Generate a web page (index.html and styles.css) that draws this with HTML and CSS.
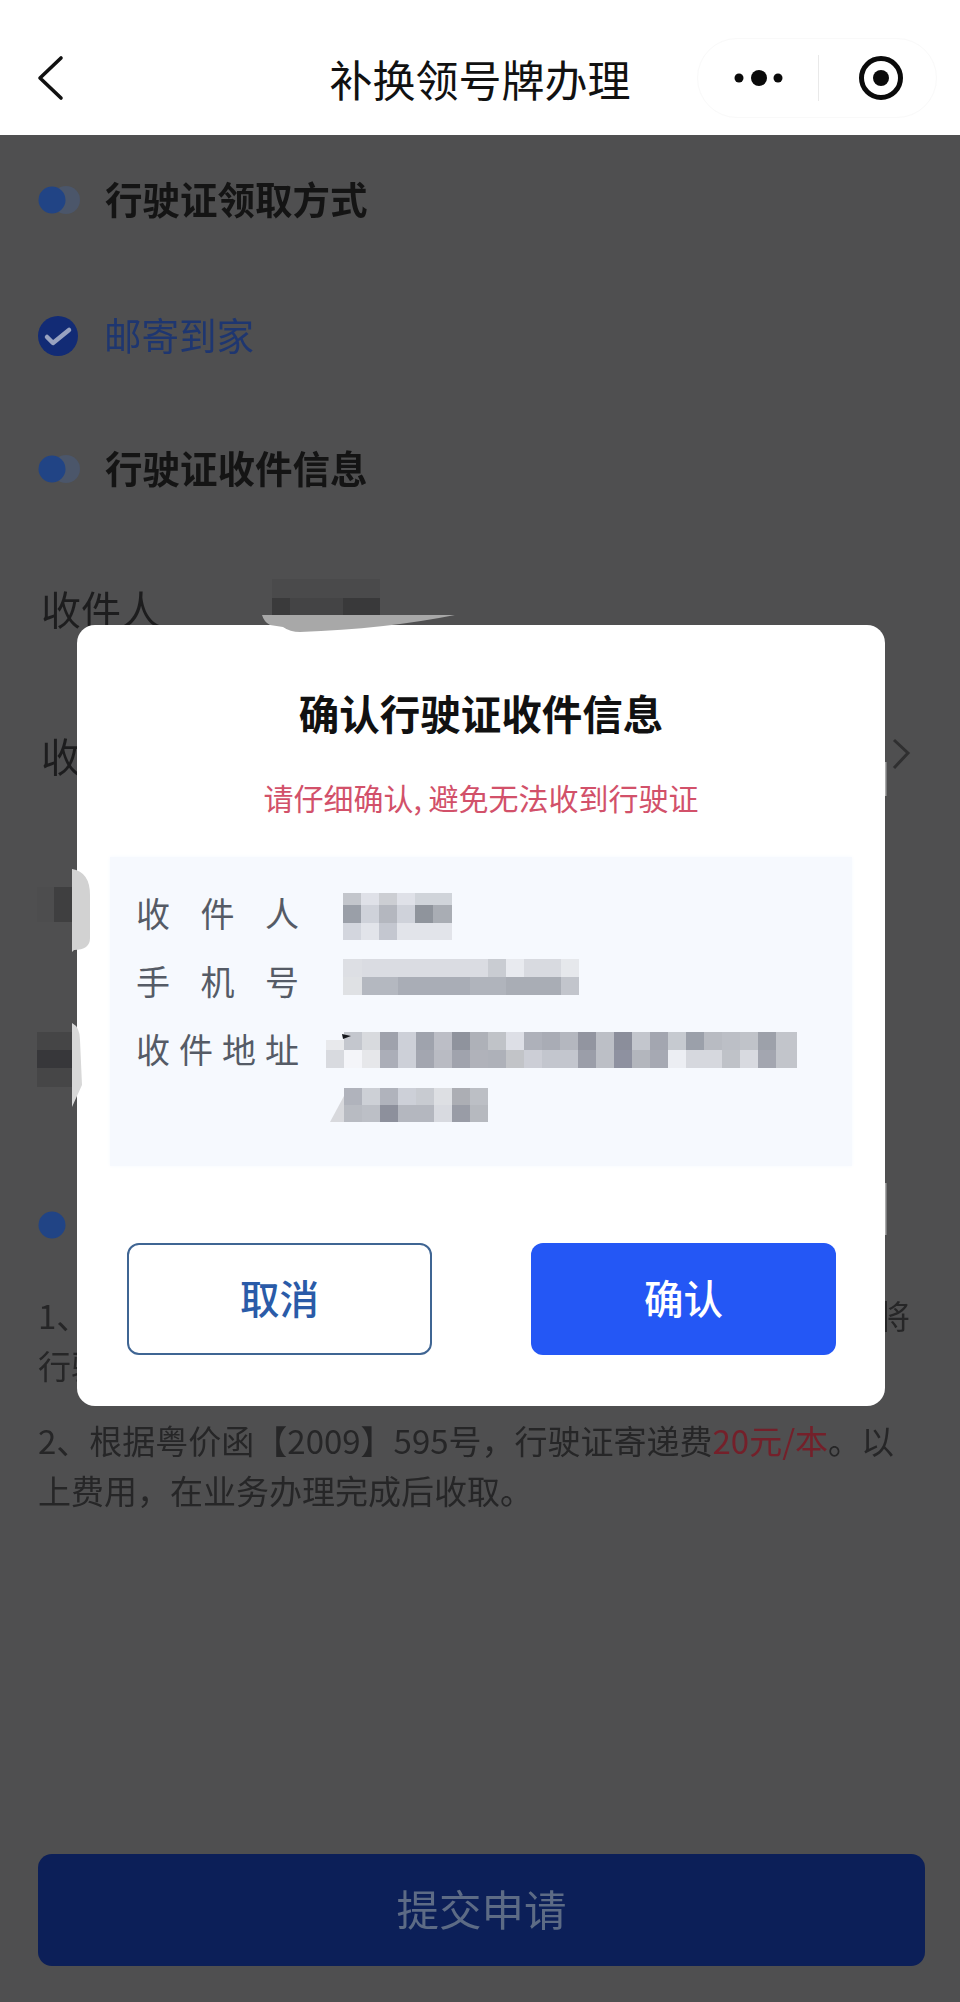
FILE: index.html
```html
<!DOCTYPE html>
<html lang="zh-CN">
<head>
<meta charset="utf-8">
<title>补换领号牌办理</title>
<link rel="stylesheet" href="styles.css">
</head>
<body>
<div class="screen">
  <header class="nav">
    <svg class="nav-back" width="30" height="48" viewBox="0 0 30 48"><polyline points="25,4 4,24 25,44" fill="none" stroke="#111" stroke-width="3.6" stroke-linecap="round" stroke-linejoin="round"/></svg>
    <h1 class="nav-title">补换领号牌办理</h1>
    <div class="capsule">
      <svg class="capsule-dots" width="60" height="20" viewBox="0 0 60 20"><circle cx="10" cy="10" r="4.5" fill="#0a0a0a"/><circle cx="30" cy="10" r="8" fill="#0a0a0a"/><circle cx="49" cy="10" r="4.5" fill="#0a0a0a"/></svg>
      <span class="capsule-line"></span>
      <svg class="capsule-target" width="46" height="46" viewBox="0 0 46 46"><circle cx="23" cy="23" r="19.5" fill="none" stroke="#0a0a0a" stroke-width="5"/><circle cx="23" cy="23" r="8" fill="#0a0a0a"/></svg>
    </div>
  </header>

  <main class="page">
    <div class="row row-a">
      <svg class="dot" width="42" height="30" viewBox="0 0 42 30"><circle cx="28" cy="15" r="14" fill="#4b566a"/><circle cx="14" cy="15" r="13.5" fill="#214485"/></svg>
      <h2 class="section-title">行驶证领取方式</h2>
    </div>
    <div class="row row-b">
      <svg class="check" width="42" height="42" viewBox="0 0 42 42"><circle cx="20" cy="21" r="20" fill="#122b75"/><polyline points="9,22 15,28 31,15" fill="none" stroke="#98a2c0" stroke-width="4.5" stroke-linecap="round" stroke-linejoin="round"/></svg>
      <span class="choice">邮寄到家</span>
    </div>
    <div class="row row-c">
      <svg class="dot" width="42" height="30" viewBox="0 0 42 30"><circle cx="28" cy="15" r="14" fill="#4b566a"/><circle cx="14" cy="15" r="13.5" fill="#214485"/></svg>
      <h2 class="section-title">行驶证收件信息</h2>
    </div>
    <div class="row row-d">
      <span class="field">收件人</span>
      <svg class="field-mosaic" width="108" height="38" viewBox="0 0 108 38">
        <rect width="108" height="19" fill="#4a4a4b"/>
        <rect y="19" width="18" height="19" fill="#3a3a3b"/><rect x="18" y="19" width="53" height="19" fill="#444445"/><rect x="71" y="19" width="37" height="19" fill="#39393a"/>
      </svg>
    </div>
    <div class="row row-e">
      <span class="field">收件地址</span>
      <svg class="row-arrow" width="20" height="34" viewBox="0 0 20 34"><polyline points="3,3 17,16 3,31" fill="none" stroke="#2f2f30" stroke-width="3"/></svg>
    </div>
    <div class="ghost ghost-one"></div>
    <div class="ghost ghost-two"></div>
    <div class="row row-f">
      <svg class="dot" width="42" height="30" viewBox="0 0 42 30"><circle cx="14" cy="15" r="13.5" fill="#214485"/></svg>
      <h2 class="section-title">温馨提示</h2>
    </div>
    <p class="note note-first note-split"><span>1、</span><span>将</span></p>
    <p class="note">行驶</p>
    <p class="note note-next">2、根据粤价函【2009】595号，行驶证寄递费<span class="fee">20元/本</span>。以<br>上费用，在业务办理完成后收取。</p>
    <button class="submit" type="button">提交申请</button>
  </main>

  <section class="dialog">
    <h2 class="dialog-title">确认行驶证收件信息</h2>
    <p class="dialog-warn">请仔细确认, 避免无法收到行驶证</p>
    <div class="info">
      <div class="info-labels">
        <span class="info-label">收件人</span>
        <span class="info-label">手机号</span>
        <span class="info-label">收件地址</span>
      </div>
      <svg class="info-mosaic" width="471" height="237" viewBox="326 888 471 237">
        <g>
          <rect x="343" y="893" width="18" height="12" fill="#c3c6cc"/><rect x="361" y="893" width="18" height="12" fill="#dfe1e8"/><rect x="379" y="893" width="18" height="12" fill="#ccced3"/><rect x="397" y="893" width="18" height="12" fill="#dfe1e8"/><rect x="415" y="893" width="37" height="12" fill="#d0d4da"/>
          <rect x="343" y="905" width="18" height="18" fill="#9a9fa8"/><rect x="361" y="905" width="18" height="18" fill="#cfd2da"/><rect x="379" y="905" width="18" height="18" fill="#b4b7bf"/><rect x="397" y="905" width="18" height="18" fill="#cfd2da"/><rect x="415" y="905" width="18" height="18" fill="#8f949c"/><rect x="433" y="905" width="19" height="18" fill="#a9adb4"/>
          <rect x="343" y="923" width="18" height="17" fill="#d3d6de"/><rect x="361" y="923" width="18" height="17" fill="#e2e4ea"/><rect x="379" y="923" width="18" height="17" fill="#c4c7d0"/><rect x="397" y="923" width="55" height="17" fill="#e2e4ea"/>
        </g>
        <g>
          <rect x="343" y="959" width="19" height="18" fill="#dddfe4"/><rect x="362" y="959" width="126" height="18" fill="#dadce2"/><rect x="488" y="959" width="18" height="18" fill="#c9ccd2"/><rect x="506" y="959" width="18" height="18" fill="#e8eaef"/><rect x="524" y="959" width="37" height="18" fill="#d8dae0"/><rect x="561" y="959" width="18" height="18" fill="#e6e8ec"/>
          <rect x="343" y="977" width="19" height="18" fill="#dfe1e4"/><rect x="362" y="977" width="36" height="18" fill="#b4b8c0"/><rect x="398" y="977" width="72" height="18" fill="#a9adb6"/><rect x="470" y="977" width="36" height="18" fill="#b0b4bc"/><rect x="506" y="977" width="55" height="18" fill="#a9adb5"/><rect x="561" y="977" width="18" height="18" fill="#c2c5cc"/>
        </g>
        <g>
          <rect x="326" y="1040" width="18" height="10" fill="#e8e9ec"/><rect x="344" y="1032" width="18" height="18" fill="#c4c7ce"/><rect x="362" y="1032" width="18" height="18" fill="#d8dade"/><rect x="380" y="1032" width="18" height="18" fill="#9fa2ac"/><rect x="398" y="1032" width="18" height="18" fill="#cdd0d8"/><rect x="416" y="1032" width="18" height="18" fill="#9fa3ad"/><rect x="434" y="1032" width="18" height="18" fill="#bcbec6"/><rect x="452" y="1032" width="18" height="18" fill="#8f939d"/><rect x="470" y="1032" width="18" height="18" fill="#aeb1b8"/><rect x="488" y="1032" width="18" height="18" fill="#c0c3c8"/><rect x="506" y="1032" width="18" height="18" fill="#dddfe6"/><rect x="524" y="1032" width="18" height="18" fill="#aeb1ba"/><rect x="542" y="1032" width="18" height="18" fill="#a9acb5"/><rect x="560" y="1032" width="18" height="18" fill="#b4b7bf"/><rect x="578" y="1032" width="18" height="18" fill="#9295a0"/><rect x="596" y="1032" width="18" height="18" fill="#bcbfc6"/><rect x="614" y="1032" width="18" height="18" fill="#8b8e9b"/><rect x="632" y="1032" width="18" height="18" fill="#c3c6cd"/><rect x="650" y="1032" width="18" height="18" fill="#a3a6b0"/><rect x="668" y="1032" width="18" height="18" fill="#c6cad0"/><rect x="686" y="1032" width="18" height="18" fill="#9ba0aa"/><rect x="704" y="1032" width="18" height="18" fill="#b8bbc2"/><rect x="722" y="1032" width="18" height="18" fill="#bcbfc6"/><rect x="740" y="1032" width="18" height="18" fill="#c0c3c9"/><rect x="758" y="1032" width="18" height="18" fill="#9da1aa"/><rect x="776" y="1032" width="21" height="18" fill="#c2c5cb"/>
          <rect x="326" y="1050" width="18" height="18" fill="#d8dadf"/><rect x="344" y="1050" width="18" height="18" fill="#f4f5f9"/><rect x="362" y="1050" width="18" height="18" fill="#e6e7ea"/><rect x="380" y="1050" width="18" height="18" fill="#abaeb8"/><rect x="398" y="1050" width="18" height="18" fill="#cdd0d8"/><rect x="416" y="1050" width="18" height="18" fill="#a3a6b0"/><rect x="434" y="1050" width="18" height="18" fill="#b9bbc3"/><rect x="452" y="1050" width="18" height="18" fill="#a0a3ad"/><rect x="470" y="1050" width="18" height="18" fill="#b0b2ba"/><rect x="488" y="1050" width="18" height="18" fill="#aeb1b9"/><rect x="506" y="1050" width="18" height="18" fill="#c2c4c8"/><rect x="524" y="1050" width="18" height="18" fill="#ccced6"/><rect x="542" y="1050" width="36" height="18" fill="#c3c6ce"/><rect x="578" y="1050" width="18" height="18" fill="#9b9ea9"/><rect x="596" y="1050" width="18" height="18" fill="#bcbfc6"/><rect x="614" y="1050" width="18" height="18" fill="#8e91a0"/><rect x="632" y="1050" width="18" height="18" fill="#b3b6bd"/><rect x="650" y="1050" width="18" height="18" fill="#a6a9b3"/><rect x="668" y="1050" width="18" height="18" fill="#eceef3"/><rect x="686" y="1050" width="36" height="18" fill="#d6d8de"/><rect x="722" y="1050" width="18" height="18" fill="#bfc2c8"/><rect x="740" y="1050" width="18" height="18" fill="#d8dae0"/><rect x="758" y="1050" width="18" height="18" fill="#a3a6b0"/><rect x="776" y="1050" width="21" height="18" fill="#c2c5cb"/>
          <polygon points="342,1034 351,1036 343,1039" fill="#15171c"/>
        </g>
        <g>
          <polygon points="330,1122 344,1096 344,1122" fill="#d8d9dd"/>
          <rect x="344" y="1088" width="18" height="17" fill="#b0b3bc"/><rect x="362" y="1088" width="18" height="17" fill="#cdd0d6"/><rect x="380" y="1088" width="18" height="17" fill="#b0b3bc"/><rect x="398" y="1088" width="18" height="17" fill="#cdd0d8"/><rect x="416" y="1088" width="18" height="17" fill="#c8cbd1"/><rect x="434" y="1088" width="18" height="17" fill="#dddfe3"/><rect x="452" y="1088" width="18" height="17" fill="#acaeb4"/><rect x="470" y="1088" width="18" height="17" fill="#bcbfc5"/>
          <rect x="344" y="1105" width="18" height="17" fill="#b8bbc2"/><rect x="362" y="1105" width="18" height="17" fill="#bcbfc6"/><rect x="380" y="1105" width="18" height="17" fill="#8d909c"/><rect x="398" y="1105" width="36" height="17" fill="#b4b7bf"/><rect x="434" y="1105" width="18" height="17" fill="#d8dae0"/><rect x="452" y="1105" width="18" height="17" fill="#999ca6"/><rect x="470" y="1105" width="18" height="17" fill="#b6b9bf"/>
        </g>
      </svg>
    </div>
    <div class="dialog-actions">
      <button class="btn btn-cancel" type="button">取消</button>
      <button class="btn btn-ok" type="button">确认</button>
    </div>
  </section>

  <svg class="retouch" width="960" height="2002" viewBox="0 0 960 2002">
    <path d="M262 615 L455 615 Q385 629 300 632 Q290 632 283 627 L270 625 Q264 622 262 615Z" fill="#a8a8a8"/>
    <path d="M72 869 Q90 872 90 895 L90 938 Q90 950 74 950 L72 952Z" fill="#d2d2d2"/>
    <path d="M72 1023 Q80 1027 80 1040 L82 1085 L72 1107Z" fill="#d8d8d8"/>
    <rect x="885" y="762" width="1.5" height="34" fill="#a8a8a8"/>
    <rect x="885" y="1183" width="1.5" height="52" fill="#a8a8a8"/>
  </svg>
</div>
</body>
</html>
```
FILE: styles.css
```css
* { box-sizing: border-box; margin: 0; padding: 0; }
html, body { width: 960px; height: 2002px; overflow: hidden; }
body { background: #4f4f50; font-family: "Noto Sans CJK SC", "Noto Sans", sans-serif; }
.screen { position: relative; width: 960px; height: 2002px; display: flex; flex-direction: column; overflow: hidden; }

/* top bar */
.nav { height: 135px; flex: none; background: #fff; display: grid; grid-template-columns: 1fr auto 1fr; align-items: center; padding-top: 21px; }
.nav-back { display: block; margin-left: 36px; }
.nav-title { font-size: 43px; font-weight: 400; color: #111; line-height: 60px; }
.capsule { justify-self: end; width: 240px; height: 80px; margin-right: 23px; border: 1px solid #f9f9f9; border-radius: 40px; display: flex; align-items: center; padding-left: 31px; }
.capsule-line { width: 1px; height: 46px; background: #e9e9e9; margin-left: 29px; }
.capsule-target { margin-left: 39px; }

/* dimmed page */
.page { flex: 1; display: flex; flex-direction: column; padding: 0 35px 36px 38px; min-height: 0; filter: blur(0.5px); }
.row { height: 60px; flex: none; display: flex; align-items: center; }
.row-a { margin-top: 35px; }
.row-b { margin-top: 76px; }
.row-c { margin-top: 73px; }
.row-d { margin-top: 79px; margin-left: 3px; }
.row-e { margin-top: 87px; margin-left: 3px; justify-content: space-between; }
.row-f { margin-top: 108px; }
.dot { margin-right: 25px; flex: none; }
.check { margin-right: 24px; flex: none; }
.section-title { font-size: 37.5px; font-weight: 700; color: #141414; line-height: 60px; white-space: nowrap; padding-bottom: 4px; }
.choice { font-size: 37.5px; color: #1e3670; line-height: 60px; padding-bottom: 4px; }
.field { font-size: 40px; color: #1d1d1e; line-height: 60px; white-space: nowrap; }
.field-mosaic { margin-left: 111px; margin-top: -20px; filter: blur(0.6px); }
.row-arrow { margin-right: 14px; margin-top: -2px; }
.ghost { flex: none; width: 35px; }
.ghost-one { height: 35px; margin-top: 102px; margin-left: -1px; background: linear-gradient(90deg, #4d4d4e 0 50%, #3f3f40 50%); }
.ghost-two { height: 55px; margin-top: 110px; margin-left: -1px; background: linear-gradient(#454546 0 33%, #37373a 33% 66%, #464647 66%); }
.note { font-size: 33px; line-height: 50px; color: #262627; white-space: nowrap; }
.note-first { margin-top: 35px; }
.note-split { display: flex; justify-content: space-between; padding-right: 15px; }
.note-next { margin-top: 25px; }
.fee { color: #74202a; }
.submit { margin-top: auto; height: 112px; width: 887px; flex: none; border: 0; border-radius: 14px; background: #0c1f58; color: #5d6b85; font: 400 42.5px "Noto Sans CJK SC", sans-serif; padding-bottom: 6px; }

/* dialog over the page */
.dialog { position: absolute; left: 77px; top: 625px; width: 808px; height: 781px; background: #fff; border-radius: 18px; display: flex; flex-direction: column; padding-top: 58px; }
.dialog-title { font-size: 40.5px; font-weight: 700; color: #111; line-height: 60px; text-align: center; }
.dialog-warn { font-size: 30px; color: #d2516a; line-height: 40px; margin-top: 34px; margin-bottom: 3px; text-align: center; }
.info { margin: 37px 33px 0; height: 309px; flex: none; background: #f6f9fe; box-shadow: 0 0 4px #f6f9fe; display: flex; padding: 31px 0 0 26px; gap: 27px; }
.info-labels { width: 163px; flex: none; display: flex; flex-direction: column; gap: 18px; }
.info-label { font-size: 34px; line-height: 50px; color: #555b66; text-align: justify; text-align-last: justify; }
.info-mosaic { flex: none; filter: blur(0.6px); }
.dialog-actions { margin-top: 77px; padding: 0 49px 0 50px; display: flex; justify-content: space-between; }
.btn { width: 305px; height: 112px; border-radius: 12px; font: 500 39.5px "Noto Sans CJK SC", sans-serif; padding-bottom: 5px; }
.btn-cancel { background: #fff; border: 2px solid #3f6593; color: #2a5ba8; }
.btn-ok { background: #2457f5; border: 0; color: #fff; }

/* retouching marks on the photographed source */
.retouch { position: absolute; left: 0; top: 0; pointer-events: none; }
```
